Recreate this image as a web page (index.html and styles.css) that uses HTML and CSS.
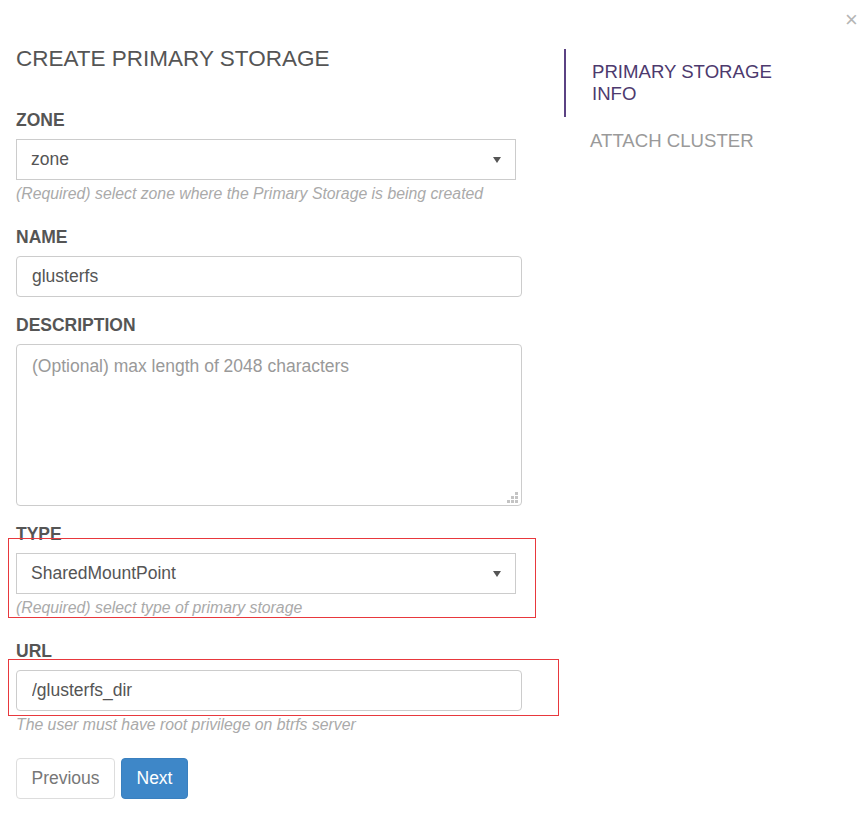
FILE: index.html
```html
<!DOCTYPE html>
<html>
<head>
<meta charset="utf-8">
<link rel="stylesheet" href="styles.css">
</head>
<body>
<div class="modal">
  <span class="close">×</span>
  <div class="form-col">
    <h1 class="title">CREATE PRIMARY STORAGE</h1>

    <div class="group">
      <div class="label">ZONE</div>
      <div class="select"><span>zone</span><svg class="caret" width="8" height="6" viewBox="0 0 8 6"><path d="M0 0H8L4 6Z"/></svg></div>
      <div class="help">(Required) select zone where the Primary Storage is being created</div>
    </div>

    <div class="group">
      <div class="label">NAME</div>
      <input class="input" type="text" value="glusterfs">
    </div>

    <div class="group">
      <div class="label">DESCRIPTION</div>
      <div class="ta-wrap">
        <textarea class="textarea" placeholder="(Optional) max length of 2048 characters"></textarea>
        <svg class="grip" width="11" height="11" viewBox="0 0 11 11"><rect x="8" y="0" width="3" height="3"/><rect x="4" y="4" width="3" height="3"/><rect x="8" y="4" width="3" height="3"/><rect x="0" y="8" width="3" height="3"/><rect x="4" y="8" width="3" height="3"/><rect x="8" y="8" width="3" height="3"/></svg>
      </div>
    </div>

    <div class="group">
      <div class="mark mark-type"></div>
      <div class="label">TYPE</div>
      <div class="select"><span>SharedMountPoint</span><svg class="caret" width="8" height="6" viewBox="0 0 8 6"><path d="M0 0H8L4 6Z"/></svg></div>
      <div class="help">(Required) select type of primary storage</div>
    </div>

    <div class="group">
      <div class="mark mark-url"></div>
      <div class="label">URL</div>
      <input class="input" type="text" value="/glusterfs_dir">
      <div class="help">The user must have root privilege on btrfs server</div>
    </div>

    <div class="buttons">
      <button class="btn btn-default">Previous</button>
      <button class="btn btn-primary">Next</button>
    </div>
  </div>

  <div class="steps">
    <div class="step active">PRIMARY STORAGE INFO</div>
    <div class="step">ATTACH CLUSTER</div>
  </div>
</div>
</body>
</html>
```

FILE: styles.css
```css
html, body {
  margin: 0;
  padding: 0;
  background: #fff;
}
body {
  font-family: "Liberation Sans", Arial, sans-serif;
  color: #555;
}
.modal {
  position: relative;
  display: flex;
  align-items: flex-start;
  padding-top: 46px;
  min-height: 777px;
}
.close {
  position: absolute;
  left: 845px;
  top: 7px;
  font-size: 22px;
  line-height: 26px;
  color: #b5b5b5;
}
.form-col {
  width: 506px;
  margin-left: 16px;
}
.title {
  margin: 0 0 38px;
  font-size: 22.5px;
  line-height: 26px;
  font-weight: normal;
  color: #555;
}
.group {
  position: relative;
  margin-bottom: 18px;
}
.label {
  font-size: 17.5px;
  font-weight: bold;
  line-height: 20px;
  margin-bottom: 9px;
  color: #555;
}
.select {
  box-sizing: border-box;
  width: 500px;
  height: 41px;
  border: 1px solid #ccc;
  display: flex;
  align-items: center;
  justify-content: space-between;
  padding: 0 14px 0 14px;
  font-size: 17.5px;
  color: #555;
}
.caret {
  fill: #555;
}
.input {
  display: block;
  box-sizing: border-box;
  width: 506px;
  height: 41px;
  border: 1px solid #ccc;
  border-radius: 4px;
  padding: 0 15px;
  margin: 0;
  font-family: "Liberation Sans", Arial, sans-serif;
  font-size: 17.5px;
  color: #555;
  outline: none;
}
.ta-wrap {
  position: relative;
  width: 506px;
  height: 162px;
}
.textarea {
  display: block;
  box-sizing: border-box;
  width: 506px;
  height: 162px;
  border: 1px solid #ccc;
  border-radius: 4px;
  padding: 9px 15px;
  margin: 0;
  resize: none;
  font-family: "Liberation Sans", Arial, sans-serif;
  font-size: 17.5px;
  line-height: 24px;
  color: #555;
  outline: none;
}
.textarea::placeholder {
  color: #999;
}
.grip {
  position: absolute;
  right: 4px;
  bottom: 3px;
  fill: #c4c4c4;
}
.help {
  margin: 4px 0 0;
  padding-bottom: 5px;
  font-size: 15.8px;
  line-height: 20px;
  font-style: italic;
  color: #aaa;
}
.mark {
  position: absolute;
  border: 1px solid #e8383d;
  pointer-events: none;
}
.mark-type {
  left: -8px;
  top: 14px;
  width: 526px;
  height: 78px;
}
.mark-url {
  left: -8px;
  top: 18px;
  width: 549px;
  height: 55px;
}
.buttons {
  display: flex;
  gap: 6px;
  margin-top: 18px;
}
.btn {
  box-sizing: border-box;
  height: 41px;
  border-radius: 4px;
  font-family: "Liberation Sans", Arial, sans-serif;
  font-size: 17.5px;
  cursor: pointer;
  padding: 0;
}
.btn-default {
  width: 99px;
  background: #fff;
  border: 1px solid #ddd;
  color: #777;
}
.btn-primary {
  width: 67px;
  background: #3e87c8;
  border: 1px solid #3a80bf;
  color: #fff;
}
.steps {
  width: 236px;
  margin-left: 42px;
  margin-top: 3px;
}
.step {
  font-size: 18.6px;
  line-height: 22px;
  color: #9a9a9a;
  padding: 13px 0 0 26px;
}
.step.active {
  border-left: 2px solid #5b4283;
  color: #4d3a6e;
  padding: 12px 0 12px 26px;
}
```
